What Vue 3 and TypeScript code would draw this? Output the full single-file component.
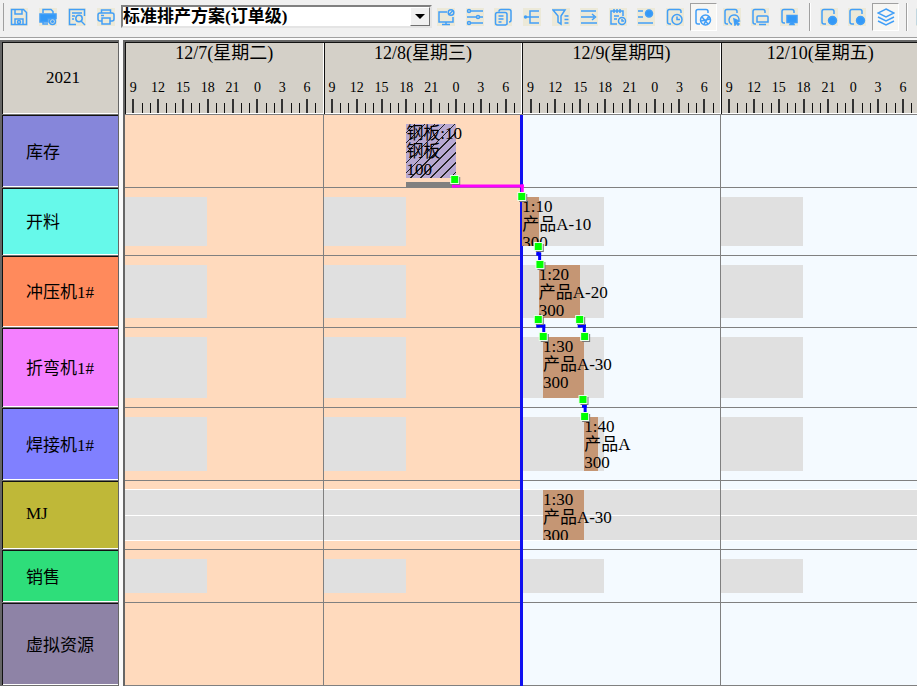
<script setup lang="ts">
interface Tool {
  name: string
  label: string
  pressed?: boolean
}

interface Task {
  start: number
  end: number
  lines: string[]
  stock?: boolean
}

interface Resource {
  name: string
  color: string
  height: number
  shifts: boolean
  fullTime?: boolean
  tasks: Task[]
}

interface Point {
  h: number
  y: number
}

interface Link {
  color: string
  points: Point[]
  pins: Point[]
}

const HOURS_SHOWN = 95.7
const NOW = 48

const pct = (hours: number): string => `${(hours / HOURS_SHOWN) * 100}%`

const fileTools: Tool[] = [
  { name: 'save', label: '保存' },
  { name: 'printSetup', label: '打印设置' },
  { name: 'preview', label: '打印预览' },
  { name: 'print', label: '打印' },
]

const planTools: Tool[] = [
  { name: 'screen', label: '显示设置' },
  { name: 'sliders', label: '参数' },
  { name: 'copy', label: '复制' },
  { name: 'tree', label: '展开' },
  { name: 'filter', label: '筛选' },
  { name: 'arrow', label: '排序' },
  { name: 'schedule', label: '排程' },
  { name: 'list', label: '列表' },
  { name: 'docClock', label: '时间' },
  { name: 'docGlobe', label: '资源甘特图', pressed: true },
  { name: 'docPointer', label: '订单甘特图' },
  { name: 'docPanel', label: '负荷图' },
  { name: 'docScreen', label: '库存图' },
]

const viewTools: Tool[] = [
  { name: 'docDot', label: '视图一' },
  { name: 'docDot', label: '视图二' },
  { name: 'layers', label: '图层', pressed: true },
]

const toolGroups = [planTools, viewTools]

const icons: Record<string, string> = {
  save: '<path d="M1.500 1.500h12l3 3v12h-15zM5 2v4h7V2M5 16v-5h8v5"/><circle cx="9" cy="14" r="1.500"/>',
  printSetup:
    '<path d="M4 5V1.500h8l2 2V6"/><path class="solid" d="M1 6h16v4.500H9V14H1z"/><path d="M4 13v3h5"/><circle cx="13.500" cy="13.500" r="3"/><circle cx="13.500" cy="13.500" r=".8"/>',
  preview: '<path d="M8 16.500H1.500v-15h15V8M4 5h10M4 8h3M4 11h2"/><circle cx="11" cy="10.500" r="3.200"/><path d="M13 13l4 4"/>',
  print: '<path d="M4.500 5V2h9v3M5 13H3q-2 0-2-2V7q0-2 2-2h12q2 0 2 2v4q0 2-2 2h-2M5 10h8v6H5zM4 7.500h3"/>',
  screen: '<path d="M10 4H2v10h14V9M5 16.500h8M9 14v2"/><circle cx="14" cy="4.500" r="2.800"/><path d="M12 6.500l4-4"/>',
  sliders:
    '<path d="M5 3h12M1 9h9M14 9h3M5 15h12"/><circle cx="3" cy="3" r="1.500"/><circle cx="12" cy="9" r="1.500"/><circle cx="3" cy="15" r="1.500"/>',
  copy: '<path d="M5 3.500Q5 1.500 7 1.500h8q2 0 2 2V12q0 2-2 2M3.500 4.500H11q2 0 2 2V16l-1.500 1H3.500q-2 0-2-2V6.500q0-2 2-2zM4.500 8h5M4.500 11h5M4.500 14h3"/>',
  tree: '<path d="M7 9H2M16 3H7v12h9M7 9h9"/><circle class="solid" cx="2.500" cy="9" r="1"/>',
  filter: '<path d="M1 2h12L9 8v8l-3-2V8zM12.500 8h4M12.500 11.500h4M12.500 15h4"/>',
  arrow: '<path d="M1 3h15M1 9h13M1 15h16M12 6l3.500 3-3.500 3"/>',
  schedule: '<path d="M8 16H2V3h12v5M5 1v4M8 1v4M11 1v4M5 8h5M5 11h3"/><circle cx="13" cy="13" r="3.500"/><path d="M13 11v2h2"/>',
  list: '<path d="M1 3h5M1 9h5M1 15h15"/><circle class="solid" cx="12" cy="5.500" r="3.500"/>',
  docClock: '<path d="M5 16H3.500q-2 0-2-2V3.500q0-2 2-2H13q2 0 2 2V5"/><circle cx="11" cy="11.500" r="5"/><path d="M11 8.500v3h3"/>',
  docGlobe:
    '<path d="M6 16H4q-2 0-2-2V3.500q0-2 2-2h8q2 0 2 2V5"/><circle cx="11.500" cy="12" r="5"/><path d="M8 9l6 7M15 8l-5 8M7 13l9-2"/>',
  docPointer: '<path d="M5 16H4q-2 0-2-2V3.500q0-2 2-2h8q2 0 2 2V5M9 16.500a5 5 0 1 1 7-4"/><path class="solid" d="M11 11l5 2-2 1 2 2-1 1-2-2-1 2z"/>',
  docPanel: '<path d="M5 16H4q-2 0-2-2V3.500q0-2 2-2h8q2 0 2 2V5M7 8h9q1 0 1 1v5H6V9q0-1 1-1zM8 16.500h7"/>',
  docScreen: '<path d="M5 15H4q-2 0-2-2V3.500q0-2 2-2h8q2 0 2 2V5"/><path class="solid" d="M7 7.500h10v7h-4l1 2h-4l1-2H7z"/>',
  docDot: '<path d="M6 16H4q-2 0-2-2V3.500q0-2 2-2h8q2 0 2 2V6"/><circle class="solid" cx="12.500" cy="12.500" r="4"/>',
  layers: '<path d="M9 1l8 4-8 4-8-4zM1 9l8 4 8-4M1 13l8 4 8-4"/>',
}

const days = ['12/7(星期二)', '12/8(星期三)', '12/9(星期四)', '12/10(星期五)']
const hourMarks = [9, 12, 15, 18, 21, 0, 3, 6]
const hoursOfDay = Array.from({ length: 23 }, (_, i) => i + 1)

const resources: Resource[] = [
  {
    name: '库存',
    color: '#8686da',
    height: 73,
    shifts: false,
    tasks: [{ start: 34, end: 40, lines: ['钢板:10', '钢板', '100'], stock: true }],
  },
  {
    name: '开料',
    color: '#66f9ea',
    height: 68,
    shifts: true,
    tasks: [{ start: 48, end: 50, lines: ['1:10', '产品A-10', '300'] }],
  },
  {
    name: '冲压机1#',
    color: '#ff8a5c',
    height: 72,
    shifts: true,
    tasks: [{ start: 50, end: 55, lines: ['1:20', '产品A-20', '300'] }],
  },
  {
    name: '折弯机1#',
    color: '#f480ff',
    height: 80,
    shifts: true,
    tasks: [{ start: 50.5, end: 55.5, lines: ['1:30', '产品A-30', '300'] }],
  },
  {
    name: '焊接机1#',
    color: '#8080ff',
    height: 73,
    shifts: true,
    tasks: [{ start: 55.5, end: 57.2, lines: ['1:40', '产品A', '300'] }],
  },
  {
    name: 'MJ',
    color: '#bfb838',
    height: 69,
    shifts: false,
    fullTime: true,
    tasks: [{ start: 50.5, end: 55.5, lines: ['1:30', '产品A-30', '300'] }],
  },
  { name: '销售', color: '#2ede7a', height: 53, shifts: true, tasks: [] },
  { name: '虚拟资源', color: '#8e83a6', height: 83, shifts: false, tasks: [] },
]

const links: Link[] = [
  {
    color: '#ff00ff',
    points: [{ h: 39.7, y: 66 }, { h: 39.7, y: 71 }, { h: 48, y: 71 }, { h: 48, y: 82 }],
    pins: [{ h: 39.9, y: 65 }, { h: 48, y: 82 }],
  },
  {
    color: '#0000ff',
    points: [{ h: 49.9, y: 132 }, { h: 49.9, y: 139 }, { h: 50.1, y: 139 }, { h: 50.1, y: 150 }],
    pins: [{ h: 50, y: 132 }, { h: 50.2, y: 150 }],
  },
  {
    color: '#0000ff',
    points: [{ h: 49.9, y: 205 }, { h: 49.9, y: 211 }, { h: 50.6, y: 211 }, { h: 50.6, y: 222 }],
    pins: [{ h: 50, y: 205 }, { h: 50.6, y: 222 }],
  },
  {
    color: '#0000ff',
    points: [{ h: 54.9, y: 205 }, { h: 54.9, y: 211 }, { h: 55.5, y: 211 }, { h: 55.5, y: 222 }],
    pins: [{ h: 55, y: 205 }, { h: 55.6, y: 222 }],
  },
  {
    color: '#0000ff',
    points: [{ h: 55.4, y: 285 }, { h: 55.4, y: 291 }, { h: 55.6, y: 291 }, { h: 55.6, y: 302 }],
    pins: [{ h: 55.4, y: 285 }, { h: 55.6, y: 302 }],
  },
]
</script>

<template>
  <div class="app">
    <div class="toolbar" role="toolbar">
      <div class="tools file-tools">
        <button v-for="t in fileTools" :key="t.label" type="button" class="tool" :aria-label="t.label">
          <svg class="icon" viewBox="0 0 18 18" v-html="icons[t.name]"></svg>
        </button>
      </div>
      <div class="plan">
        <select class="plan-select" aria-label="排产方案">
          <option>标准排产方案(订单级)</option>
        </select>
        <span class="plan-arrow"></span>
      </div>
      <template v-for="(group, g) in toolGroups" :key="g">
        <div class="tools" :class="g === 0 ? 'plan-tools' : 'view-tools'">
          <button
            v-for="t in group"
            :key="t.label"
            type="button"
            class="tool"
            :class="{ pressed: t.pressed }"
            :aria-label="t.label"
          >
            <svg class="icon" viewBox="0 0 18 18" v-html="icons[t.name]"></svg>
          </button>
        </div>
        <span class="separator"></span>
      </template>
      <div class="more-tools">
        <button type="button" class="tool" aria-label="更多">
          <svg class="icon" viewBox="0 0 18 18" v-html="icons.save"></svg>
        </button>
      </div>
    </div>

    <main class="gantt">
      <section class="names">
        <div class="year">2021</div>
        <div
          v-for="r in resources"
          :key="r.name"
          class="name"
          :style="{ height: `${r.height}px`, backgroundColor: r.color }"
        >
          {{ r.name }}
        </div>
      </section>

      <section class="chart">
        <div class="scale">
          <div
            v-for="(day, d) in days"
            :key="day"
            class="day"
            :style="{ left: pct(d * 24), width: pct(24) }"
          >
            <div class="day-name">{{ day }}</div>
            <span
              v-for="(mark, m) in hourMarks"
              :key="mark"
              class="hour"
              :style="{ left: `${((m * 3 + 1) / 24) * 100}%` }"
              >{{ mark }}</span
            >
            <i
              v-for="h in hoursOfDay"
              :key="h"
              class="tick"
              :class="{ major: h % 3 === 1 }"
              :style="{ left: `${(h / 24) * 100}%` }"
            ></i>
          </div>
        </div>

        <div class="rows">
          <div class="past" :style="{ width: pct(NOW) }"></div>
          <div v-for="r in resources" :key="r.name" class="row" :style="{ height: `${r.height}px` }">
            <template v-if="r.shifts">
              <div
                v-for="(day, d) in days"
                :key="day"
                class="shift"
                :style="{ left: pct(d * 24), width: pct(9.9) }"
              ></div>
            </template>
            <div v-if="r.fullTime" class="full-time"></div>
          </div>
          <i v-for="d in 3" :key="d" class="day-line" :style="{ left: pct(d * 24) }"></i>
          <i class="now" :style="{ left: pct(NOW) }"></i>
          <div class="task-rows">
            <div v-for="r in resources" :key="r.name" class="task-row" :style="{ height: `${r.height}px` }">
              <template v-for="t in r.tasks" :key="t.start">
                <div
                  class="task"
                  :class="{ stock: t.stock }"
                  :style="{ left: pct(t.start), width: pct(t.end - t.start) }"
                >
                  <div class="task-text">
                    <div v-for="(line, l) in t.lines" :key="l" class="task-line">{{ line }}</div>
                  </div>
                </div>
                <div
                  v-if="t.stock"
                  class="stock-level"
                  :style="{ left: pct(t.start), width: pct(t.end - t.start) }"
                ></div>
              </template>
            </div>
          </div>
          <svg class="links">
            <g v-for="(link, n) in links" :key="n">
              <line
                v-for="s in link.points.length - 1"
                :key="s"
                :x1="pct(link.points[s - 1].h)"
                :y1="link.points[s - 1].y"
                :x2="pct(link.points[s].h)"
                :y2="link.points[s].y"
                :stroke="link.color"
                stroke-width="3"
                stroke-linecap="square"
              />
            </g>
            <g v-for="(link, n) in links" :key="`pins-${n}`">
              <template v-for="(pin, p) in link.pins" :key="p">
                <rect class="pin-shadow" :x="pct(pin.h)" :y="pin.y" width="8" height="8" />
                <rect class="pin-edge" :x="pct(pin.h)" :y="pin.y" width="9" height="9" />
                <rect class="pin" :x="pct(pin.h)" :y="pin.y" width="7" height="7" />
              </template>
            </g>
          </svg>
        </div>
      </section>
    </main>
  </div>
</template>

<style>
body {
  margin: 0;
  background: #f0f0f0;
}
</style>

<style scoped>
.app {
  overflow: hidden;
  color: #000;
  font-family: 'Liberation Serif', 'Noto Sans CJK SC', serif;
  font-size: 17px;
}

.toolbar {
  display: flex;
  align-items: center;
  box-sizing: border-box;
  height: 38px;
  padding: 0 0 4px 3px;
  border-bottom: 1px solid #a0a0a0;
  background: #f0f0f0;
}

.tools {
  display: grid;
  grid-auto-flow: column;
  grid-auto-columns: 1fr;
  justify-items: center;
}

.file-tools {
  flex: 0 0 116px;
  border-left: 1px solid #a0a0a0;
}

.plan-tools {
  flex: 13 1 0;
}

.view-tools {
  flex: 3 1 0;
}

.more-tools {
  flex: 0 0 6px;
  overflow: hidden;
}

.tool {
  display: flex;
  align-items: center;
  justify-content: center;
  box-sizing: border-box;
  width: 27px;
  height: 28px;
  padding: 0;
  border: 1px solid transparent;
  background: none;
}

.tool.pressed {
  border-color: #a0a0a0 #fff #fff #a0a0a0;
  background: #f7f6f3;
}

.icon {
  width: 18px;
  height: 18px;
  background: #ece9d8;
  fill: none;
  stroke: #429ff7;
  stroke-width: 1.5;
}

.pressed .icon {
  background: none;
}

.icon :deep(.solid) {
  fill: #3399f7;
}

.separator {
  flex: none;
  width: 1px;
  height: 28px;
  margin: 0 3px 0 6px;
  border-right: 1px solid #fff;
  background: #a0a0a0;
}

.plan {
  position: relative;
  flex: 0 1 311px;
  margin-left: 1px;
}

.plan-select {
  display: block;
  box-sizing: border-box;
  width: 100%;
  height: 23px;
  padding: 0 20px 0 0;
  border: 2px solid;
  border-color: #808080 #e4e4e4 #e4e4e4 #808080;
  border-radius: 0;
  outline: 0;
  appearance: none;
  background: #fff;
  color: #000;
  font-family: 'Liberation Serif', 'Noto Sans CJK SC', serif;
  font-size: 17px;
  font-weight: 700;
  line-height: 19px;
}

.plan-arrow {
  position: absolute;
  top: 2px;
  right: 2px;
  bottom: 2px;
  display: flex;
  align-items: center;
  justify-content: center;
  box-sizing: border-box;
  width: 20px;
  border: 1px solid;
  border-color: #fff #707070 #707070 #fff;
  background: #f0f0f0;
  pointer-events: none;
}

.plan-arrow::before {
  content: '';
  border: 5px solid transparent;
  border-top-color: #000;
  border-bottom: 0;
}

.gantt {
  display: grid;
  grid-template-columns: 119px 1fr;
  gap: 4px;
  padding-top: 2px;
  background: #fafafa;
}

.names {
  border-top: 2px solid #666;
  border-left: 2px solid #666;
  border-right: 1px solid #666;
}

.year,
.name {
  display: flex;
  align-items: center;
  box-sizing: border-box;
  padding-bottom: 2px;
  border-bottom: 1px solid #707070;
  box-shadow: inset 1px 1px #111, inset 0 -1px #fff;
}

.year {
  justify-content: center;
  height: 73px;
  padding: 0 0 0 6px;
  background: #d4d0c8;
}

.name {
  padding-left: 24px;
}

.chart {
  min-width: 0;
  overflow: hidden;
  border-top: 2px solid #666;
  border-left: 2px solid #666;
}

.scale {
  position: relative;
  box-sizing: border-box;
  height: 73px;
  border-bottom: 1px solid #808080;
  background: #d4d0c8;
}

.day {
  position: absolute;
  top: 0;
  bottom: 0;
  box-sizing: border-box;
  box-shadow: inset 1px 1px #111, inset -1px -1px #fff;
}

.day-name {
  padding-top: 1px;
  font-size: 18px;
  line-height: 20px;
  text-align: center;
}

.hour {
  position: absolute;
  top: 38px;
  width: 20px;
  margin-left: -10px;
  font-size: 14px;
  line-height: 16px;
  text-align: center;
}

.tick {
  position: absolute;
  bottom: 1px;
  width: 1px;
  height: 10px;
  background: #111;
}

.tick.major {
  width: 2px;
  height: 14px;
  margin-left: -1px;
  background: #333;
}

.rows {
  position: relative;
  background: #f4faff;
}

.past {
  position: absolute;
  top: 0;
  bottom: 0;
  left: 0;
  background: #ffdabd;
}

.row {
  position: relative;
  box-sizing: border-box;
  border-bottom: 1px solid #808080;
}

.shift {
  position: absolute;
  top: 9px;
  bottom: 9px;
  background: #e0e0e0;
}

.full-time {
  position: absolute;
  top: 8px;
  right: 0;
  bottom: 8px;
  left: 0;
  border-top: 1px solid #fff;
  border-bottom: 1px solid #fff;
  background: linear-gradient(#fff, #fff) 0 50% / 100% 1px no-repeat #e0e0e0;
}

.day-line,
.now {
  position: absolute;
  top: 0;
  bottom: 0;
  width: 1px;
  margin-left: -1px;
  background: #808080;
}

.now {
  width: 3px;
  margin-left: -2px;
  background: #1010f0;
}

.task-rows {
  position: absolute;
  top: 0;
  right: 0;
  left: 0;
}

.task-row {
  position: relative;
}

.task {
  position: absolute;
  top: 9px;
  bottom: 10px;
  background: #c59674;
}

.task-text {
  width: max-content;
  height: 100%;
  overflow: hidden;
  white-space: nowrap;
}

.task-line {
  height: 18px;
  line-height: 20px;
}

.stock {
  background: repeating-linear-gradient(135deg, #b8a9d2 0, #b8a9d2 6px, #222 6px, #222 7px);
}

.stock-level {
  position: absolute;
  bottom: 1px;
  height: 5px;
  background: #808080;
}

.links {
  position: absolute;
  top: 0;
  left: 0;
  width: 100%;
  height: 100%;
  pointer-events: none;
}

.pin-shadow {
  fill: #777;
  transform: translate(-3px, -3px);
}

.pin-edge {
  fill: #e8ffe8;
  transform: translate(-5px, -5px);
}

.pin {
  fill: #00ff00;
  transform: translate(-4px, -4px);
}
</style>
